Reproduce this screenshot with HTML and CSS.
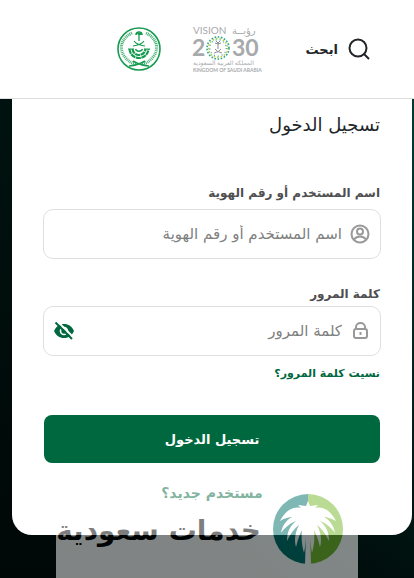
FILE: index.html
```html
<!DOCTYPE html>
<html lang="ar" dir="rtl">
<head>
    <meta charset="UTF-8">
    <meta name="viewport" content="width=device-width, initial-scale=1.0">
    <title>تسجيل الدخول</title>
    <link rel="stylesheet" href="styles.css">
</head>
<body>
    <header class="header">
        <button type="button" class="search-btn">
            <svg class="search-icon" viewBox="0 0 22 22" aria-hidden="true">
                <circle cx="10" cy="10" r="8.5"/>
                <path d="M16 16l5 5"/>
            </svg>
            <span>ابحث</span>
        </button>
        <svg class="vision-logo" viewBox="0 0 70 50" role="img" aria-label="Vision 2030">
            <g class="vision-gray">
                <text x="1" y="10" font-size="10">VISION</text>
                <text x="40" y="10" font-size="10">رؤيــة</text>
                <text x="0" y="32" font-size="23" font-weight="700">2</text>
                <text x="40" y="32" font-size="23" font-weight="700">30</text>
                <text x="1" y="41" font-size="6">المملكة العربية السعودية</text>
                <text x="1" y="48" font-size="5" font-weight="700">KINGDOM OF SAUDI ARABIA</text>
            </g>
            <g fill="none">
                <circle cx="26" cy="24" r="11" stroke="#27a58c" stroke-width="1.6" stroke-dasharray="1.6 1.6"/>
                <circle cx="26" cy="24" r="9.400" stroke="#b8cf45" stroke-width="1.6" stroke-dasharray="1.5 2"/>
                <circle cx="26" cy="24" r="8.200" stroke="#3f9fd0" stroke-width="1.2" stroke-dasharray="1 3"/>
            </g>
            <path d="M26 25v-6m0 1l-3-1m3 1l3-1m-3 0l-2-2m2 2l2-2M22 29q5-1 7-4m1 4q-5-1-7-4" fill="none" stroke="#8b8d91"/>
        </svg>
        <svg class="moi-logo" viewBox="0 0 44 44" role="img" aria-label="وزارة الداخلية">
            <g fill="none" stroke="#169b50">
                <circle cx="22" cy="22" r="21" stroke-width="1.6"/>
                <path d="M15 6C3 12 2 23 8 30c3 4 6 6 11 7M29 6c12 6 13 17 7 24-3 4-6 6-11 7" stroke-width="3" stroke-dasharray="1 .8" opacity=".8"/>
                <path d="M12 39q10-1 16-5M32 39q-10-1-16-5" stroke-width="1.6"/>
                <path d="M22 14V6" stroke-width="1.3"/>
                <path d="M19 8q0-3 3-3t3 3M20 6l2 1 2-1" stroke-width="1.6"/>
                <path d="M16 19q8-1 11-5M28 19q-8-1-11-5" stroke-width="1.2"/>
                <path d="M11 22h6M27 22h6" stroke-width="1"/>
                <path d="M12.500 22c1 12 18 12 19 0M15.500 22c1 8 12 8 13 0" stroke-width="2.2" stroke-dasharray="5 .6"/>
                <path d="M18.500 22c1 3 6 3 7 0" stroke-width="1.3"/>
            </g>
        </svg>
    </header>

    <main class="login-card">
        <h1>تسجيل الدخول</h1>
        <form id="login-form">
            <label for="username">اسم المستخدم أو رقم الهوية</label>
            <div class="field">
                <svg class="field-icon" viewBox="0 0 20 20" aria-hidden="true">
                    <circle cx="10" cy="10" r="8.5"/>
                    <circle cx="10" cy="7.5" r="3"/>
                    <path d="M4 15.5c1.500-2 3.500-3 6-3s4.500 1 6 3"/>
                </svg>
                <input type="text" id="username" name="username" placeholder="اسم المستخدم أو رقم الهوية">
            </div>

            <label for="password">كلمة المرور</label>
            <div class="field">
                <svg class="field-icon" viewBox="0 0 20 20" aria-hidden="true">
                    <rect x="4" y="8" width="13" height="9" rx="2"/>
                    <path d="M6 8V6a4.500 4 0 0 1 9 0V8M10.500 11v3"/>
                </svg>
                <input type="password" id="password" name="password" placeholder="كلمة المرور">
                <button type="button" class="toggle-btn" aria-label="إظهار كلمة المرور">
                    <svg viewBox="0 0 20 18" aria-hidden="true">
                        <path d="M0 9C2 4.500 5.500 2 10 2s8 2.500 10 7c-2 4.500-5.500 7-10 7S2 13.500 0 9z" fill="#00683e"/>
                        <circle cx="10" cy="9" r="3.500" fill="none" stroke="#fff" stroke-width="1.600"/>
                        <path d="M3.300-.8l17 17" stroke="#fff" stroke-width="2"/>
                        <path d="M1.500.5l16.500 16.500" stroke="#00683e" stroke-width="2"/>
                    </svg>
                </button>
            </div>
            <a href="#" class="forgot-link">نسيت كلمة المرور؟</a>
            <button type="submit" class="submit-btn">تسجيل الدخول</button>
        </form>
        <a href="#" class="new-user">مستخدم جديد؟</a>
    </main>

    <div class="watermark">
        <svg class="palm-logo" viewBox="0 0 70 70" aria-hidden="true">
            <path d="M35 0a35 35 0 0 0 0 70z" fill="#00716c"/>
            <path d="M35 0a35 35 0 0 1 0 70z" fill="#76b82a"/>
            <g fill="#fff">
                <path d="M35 7l2 5 8-1-3 3c8-2 16 3 21 13-6-3-9-4-12-4 7 4 10 10 11 16-5-7-10-10-15-12 7 6 9 12 9 20-4-8-7-12-12-16 4 7 5 16 3 22-2-8-4-13-6-17 1 9 0 16-2 23-1-6-2-11-2-16h-4c0 5-1 10-2 16-2-7-3-14-2-23-2 4-4 9-6 17-2-6-1-15 3-22-5 4-8 8-12 16 0-8 2-14 9-20-5 2-10 5-15 12 1-6 4-12 11-16-3 0-7 1-12 4 5-10 13-15 21-13l-3-3 8 1z"/>
                <path d="M33 38h4l1 32h-6z"/>
            </g>
        </svg>
        <span>خدمات سعودية</span>
    </div>
</body>
</html>
```
FILE: styles.css
```css
* {
    box-sizing: border-box;
}
body {
    margin: 0;
    min-height: 100vh;
    position: relative;
    overflow: hidden;
    font-family: "DejaVu Sans", sans-serif;
    color: #212529;
    background: linear-gradient(rgba(0, 5, 5, 0) 20%, rgba(0, 5, 5, 0.8)), linear-gradient(90deg, #00120f 50%, #003a30);
}
button, input {
    font-family: inherit;
}
a {
    text-decoration: none;
}
.header {
    display: flex;
    align-items: center;
    height: 99px;
    padding: 0 44px;
    background-color: #fff;
    border-bottom: 1px solid #dedede;
}
.search-btn {
    display: flex;
    align-items: center;
    gap: 10px;
    padding: 0;
    border: none;
    background: none;
    color: #212529;
    font-size: 13px;
    font-weight: bold;
    cursor: pointer;
}
.search-icon {
    width: 22px;
    height: 22px;
    fill: none;
    stroke: #212529;
    stroke-width: 2;
}
.vision-logo {
    width: 70px;
    height: 50px;
    margin-right: 44px;
    direction: ltr;
}
.vision-gray {
    fill: #a7a9ac;
    font-family: Lato, "DejaVu Sans", sans-serif;
}
.moi-logo {
    width: 44px;
    height: 44px;
    margin-right: 31px;
}
.login-card {
    margin: 0 2px 0 12px;
    padding: 10px 32px 32px;
    background-color: #fff;
    border-radius: 0 0 20px 20px;
}
h1 {
    margin: 0 0 40px;
    font-size: 18px;
    font-weight: normal;
    line-height: 32px;
}
#login-form {
    display: flex;
    flex-direction: column;
}
label {
    color: #4f4f4f;
    font-size: 12px;
    font-weight: bold;
    line-height: 24px;
    margin-bottom: 4px;
}
.field {
    display: flex;
    align-items: center;
    gap: 8px;
    height: 50px;
    margin: 0 -1px;
    padding: 0 10px;
    border: 1px solid #dfdfdf;
    border-radius: 10px;
}
.field + label {
    margin-top: 23px;
    margin-bottom: 0;
}
.field-icon {
    width: 20px;
    height: 20px;
    flex: none;
    fill: none;
    stroke: #999;
    stroke-width: 2;
}
.field input {
    flex: 1;
    min-width: 0;
    height: 40px;
    padding: 0;
    border: none;
    outline: none;
    background: none;
    font-size: 15px;
}
.field input::placeholder {
    color: #808080;
    opacity: 1;
}
.toggle-btn {
    padding: 0;
    border: none;
    background: none;
    cursor: pointer;
}
.toggle-btn svg {
    display: block;
    width: 20px;
    height: 18px;
}
.forgot-link {
    align-self: flex-start;
    margin: 6px 0 29px;
    color: #00683e;
    font-size: 11px;
    font-weight: bold;
    line-height: 24px;
}
.submit-btn {
    height: 48px;
    border: none;
    border-radius: 8px;
    background-color: #00683e;
    color: #fff;
    font-size: 13px;
    font-weight: bold;
    cursor: pointer;
}
.new-user {
    display: block;
    margin-top: 20px;
    color: #00683e;
    font-size: 14px;
    font-weight: bold;
    line-height: 20px;
    text-align: center;
}
/* translucent banner over the bottom of the card */
.watermark {
    position: absolute;
    right: 56px;
    left: 56px;
    bottom: 0;
    height: 96px;
    padding: 12px 15px 0 0;
    display: flex;
    align-items: flex-start;
    gap: 12px;
    background-color: #fff;
    opacity: 0.5;
    color: #000;
}
.watermark span {
    font-size: 28px;
    font-weight: bold;
    line-height: 74px;
    white-space: nowrap;
}
.palm-logo {
    width: 70px;
    height: 70px;
    flex: none;
}
```
